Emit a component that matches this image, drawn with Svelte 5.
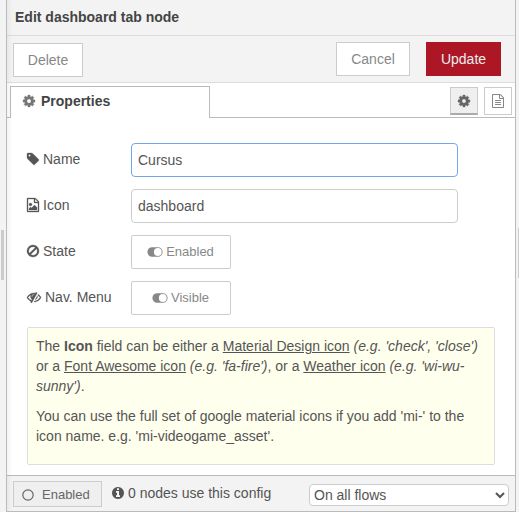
<script>
  let name = $state('Cursus');
  let icon = $state('dashboard');

  const page = 'M1596 380q28 28 48 76t20 88v1152q0 40-28 68t-68 28h-1344q-40 0-68-28t-28-68v-1600q0-40 28-68t68-28h896q40 0 88 20t76 48zm-444-244v376h376q-10-29-22-41l-313-313q-12-12-41-22zm384 1528v-1024h-416q-40 0-68-28t-28-68v-416h-768v1536h1280z';

  const icons = {
    cog: 'M1152 896q0-106-75-181t-181-75-181 75-75 181 75 181 181 75 181-75 75-181zm512-109v222q0 12-8 23t-20 13l-185 28q-19 54-39 91 35 50 107 138 10 12 10 25t-9 23q-27 37-99 108t-94 71q-12 0-26-9l-138-108q-44 23-91 38-16 136-29 186-7 28-36 28h-222q-14 0-24.5-8.5t-11.5-21.5l-28-184q-49-16-90-37l-141 107q-10 9-25 9-14 0-25-11-126-114-165-168-7-10-7-23 0-12 8-23 15-21 51-66.5t54-70.5q-27-50-41-99l-183-27q-13-2-21-12.5t-8-23.5v-222q0-12 8-23t19-13l186-28q14-46 39-92-40-57-107-138-10-12-10-24 0-10 9-23 26-36 98.5-107.5t94.5-71.5q13 0 26 10l138 107q44-23 91-38 16-136 29-186 7-28 36-28h222q14 0 24.5 8.5t11.5 21.5l28 184q49 16 90 37l142-107q9-9 24-9 13 0 25 10 129 119 165 170 7 8 7 22 0 12-8 23-15 21-51 66.5t-54 70.5q26 50 41 98l183 28q13 2 21 12.5t8 23.5z',
    tag: 'M576 448q0-53-37.5-90.5t-90.5-37.5-90.5 37.5-37.5 90.5 37.5 90.5 90.5 37.5 90.5-37.5 37.5-90.5zm1067 576q0 53-37 90l-491 492q-39 37-91 37-53 0-90-37l-715-716q-38-37-64.5-101t-26.5-117v-416q0-52 38-90t90-38h416q53 0 117 26.5t102 64.5l715 714q37 39 37 91z',
    image: page + 'm-128-448v320h-1024v-192l192-192 128 128 384-384zm-832-192q-80 0-136-56t-56-136 56-136 136-56 136 56 56 136-56 136-136 56z',
    doc: page + 'M512 800q0-32 32-32h704q32 0 32 32v64q0 32-32 32h-704q-32 0-32-32zM512 1056q0-32 32-32h704q32 0 32 32v64q0 32-32 32h-704q-32 0-32-32zM512 1312q0-32 32-32h704q32 0 32 32v64q0 32-32 32h-704q-32 0-32-32z',
    ban: 'M1440 893q0-161-87-295l-754 753q137 89 297 89 111 0 211.5-43.5t173.5-116.5 116-174.5 43-212.5zm-999 299l755-754q-135-91-300-91-148 0-273 73t-198 199-73 274q0 162 89 299zm1223-299q0 157-61 300t-163.5 246-245 164-298.5 61-298.5-61-245-164-163.5-246-61-300 61-299.5 163.5-245.5 245-164 298.5-61 298.5 61 245 164 163.5 245.5 61 299.5z',
    eye: 'M555 1335l78-141q-87-63-136-159t-49-203q0-121 61-225-229 117-381 353 167 258 427 375zm389-759q0-20-14-34t-34-14q-125 0-214.5 89.5t-89.5 214.5q0 20 14 34t34 14 34-14 14-34q0-86 61-147t147-61q20 0 34-14t14-34zm363-191q0 7-1 9-106 189-316 567t-315 566l-49 89q-10 16-28 16-12 0-134-70-16-10-16-28 0-12 44-87-143-65-263.5-173t-208.5-245q-20-31-20-69t20-69q153-235 380-371t496-136q89 0 180 17l54-97q10-16 28-16 5 0 18 6t31 15.5 33 18.5 31.5 18.5 19.5 11.5q16 10 16 27zm37 447q0 139-79 253.5t-209 164.5l280-502q8 45 8 84zm448 128q0 35-20 69-39 64-109 145-150 172-347.5 267t-419.5 95l74-132q212-18 392.5-137t301.5-307q-115-179-282-294l63-112q95 64 182.5 153t144.5 184q20 34 20 69z',
    info: 'M1152 1376v-160q0-14-9-23t-23-9h-96v-512q0-14-9-23t-23-9h-320q-14 0-23 9t-9 23v160q0 14 9 23t23 9h96v320h-96q-14 0-23 9t-9 23v160q0 14 9 23t23 9h448q14 0 23-9t9-23zm-128-896v-160q0-14-9-23t-23-9h-192q-14 0-23 9t-9 23v160q0 14 9 23t23 9h192q14 0 23-9t9-23zm640 416q0 209-103 385.5t-279.5 279.5-385.5 103-385.5-103-279.5-279.5-103-385.5 103-385.5 279.5-279.5 385.5-103 385.5 103 279.5 279.5 103 385.5z'
  };
</script>

{#snippet glyph(id)}
  <svg class="glyph" class:wide={id === 'eye'} class:thin={id === 'doc' || id === 'info'} viewBox={id === 'eye' ? '0 0 1792 1792' : '128 0 1536 1792'}>
    <path d={icons[id]} />
  </svg>
{/snippet}

{#snippet toggle()}
  <svg class="toggle" viewBox="0 0 16 10">
    <path fill-rule="evenodd" d="M5.2 .2h5.6a4.8 4.8 0 0 1 0 9.6h-5.6a4.8 4.8 0 0 1 0-9.6zM10.8 1.1a3.9 3.9 0 1 0 0 7.8a3.9 3.9 0 0 0 0-7.8z" />
  </svg>
{/snippet}

<div class="screen">
  <div class="rail left"><i></i></div>
  <section class="tray">
    <header>Edit dashboard tab node</header>
    <div class="toolbar">
      <button class="btn delete">Delete</button>
      <span class="grow"></span>
      <button class="btn cancel">Cancel</button>
      <button class="btn primary">Update</button>
    </div>
    <div class="tabs">
      <div class="tab">{@render glyph('cog')}<span>Properties</span></div>
      <div class="tools">
        <button class="tool active" aria-label="Properties">{@render glyph('cog')}</button>
        <button class="tool" aria-label="Description">{@render glyph('doc')}</button>
      </div>
    </div>
    <div class="body">
      <div class="row">
        <label for="name">{@render glyph('tag')}<span>Name</span></label>
        <input id="name" class="focus" bind:value={name} />
      </div>
      <div class="row">
        <label for="icon">{@render glyph('image')}<span>Icon</span></label>
        <input id="icon" bind:value={icon} />
      </div>
      <div class="row">
        <div class="label">{@render glyph('ban')}<span>State</span></div>
        <button class="switch">{@render toggle()}Enabled</button>
      </div>
      <div class="row">
        <div class="label">{@render glyph('eye')}<span>Nav. Menu</span></div>
        <button class="switch">{@render toggle()}Visible</button>
      </div>
      <div class="tips">
        <p>The <b>Icon</b> field can be either a <u>Material Design icon</u> <i>(e.g. 'check', 'close')</i> or a <u>Font Awesome icon</u> <i>(e.g. 'fa-fire')</i>, or a <u>Weather icon</u> <i>(e.g. 'wi-wu-sunny')</i>.</p>
        <p>You can use the full set of google material icons if you add 'mi-' to the icon name. e.g. 'mi-videogame_asset'.</p>
      </div>
    </div>
    <footer>
      <button class="enable"><svg viewBox="0 0 12 12"><circle cx="6" cy="6" r="5.2" /></svg>Enabled</button>
      <div class="usage">{@render glyph('info')}<span>0 nodes use this config</span></div>
      <select aria-label="Scope"><option>On all flows</option></select>
    </footer>
  </section>
  <div class="rail right"><i></i></div>
</div>

<style>
  :global(body) { margin: 0; overflow: hidden; }
  .screen, .screen * { box-sizing: border-box; }
  .screen {
    display: flex;
    width: 519px;
    height: 512px;
    background: #f3f3f3;
    color: #555;
    font: 14px/20px "Liberation Sans", Arial, sans-serif;
  }
  button, input, select { font: inherit; color: inherit; margin: 0; }
  button { padding: 0; }
  .rail { width: 6px; padding: 230px 0 0 1px; }
  .rail.right { width: 3px; padding: 228px 0 0 2px; }
  .rail i { display: block; width: 3px; height: 50px; background: #ccc; }
  .rail.right i { width: 1px; }
  .tray {
    position: relative;
    display: flex;
    flex-direction: column;
    width: 510px;
    background: #fff;
    border: solid #bbb;
    border-width: 0 1px 1px;
  }
  .tray::after {
    content: '';
    position: absolute;
    inset: 0 auto 0 0;
    width: 6px;
    background: linear-gradient(90deg, rgba(0, 0, 0, .045), transparent);
    pointer-events: none;
  }
  .glyph {
    display: block;
    flex: none;
    width: 12px;
    height: 14px;
    overflow: visible;
    fill: currentColor;
    stroke: currentColor;
    stroke-width: 40;
  }
  .glyph.wide { width: 14px; }
  .glyph.thin { stroke: none; }
  header {
    height: 36px;
    padding: 7px 8px;
    background: #f3f3f3;
    border-bottom: 1px solid #ddd;
    color: #444;
    font-weight: bold;
  }
  .toolbar {
    display: flex;
    height: 47px;
    padding: 6px 14px 0 6px;
    background: #f3f3f3;
    border-bottom: 1px solid #ddd;
  }
  .grow { flex: 1; }
  .btn { height: 34px; background: #fff; border: 1px solid #ccc; color: #888; }
  .delete { width: 70px; margin-top: 1px; }
  .cancel { width: 74px; margin-right: 16px; }
  .primary { width: 75px; background: #ad1625; border-color: #ad1625; color: #eee; }
  .tabs {
    display: flex;
    justify-content: space-between;
    height: 35px;
    padding: 3px 3px 0;
    border-bottom: 1px solid #bbb;
  }
  .tab {
    display: flex;
    align-items: center;
    width: 200px;
    height: 32px;
    padding: 0 12px 3px;
    gap: 6px;
    background: #fff;
    border: 1px solid #bbb;
    border-bottom: 0;
    color: #444;
    font-weight: bold;
  }
  .tab .glyph { color: #777; }
  .tools { display: flex; gap: 6px; padding-top: 1px; }
  .tool {
    display: flex;
    align-items: center;
    justify-content: center;
    width: 28px;
    height: 28px;
    background: #fff;
    border: 1px solid #ccc;
    color: #888;
  }
  .tool.active { background: #efefef; border-bottom: 2px solid #aaa; color: #666; }
  .body { flex: 1; padding: 25px 20px 0; }
  .row { display: flex; height: 34px; margin-bottom: 12px; }
  label, .label { display: flex; align-items: center; gap: 4px; width: 104px; padding-bottom: 2px; }
  input {
    width: 327px;
    height: 34px;
    padding: 0 6px;
    background: #fff;
    border: 1px solid #ccc;
    border-radius: 4px;
    outline: none;
  }
  .focus { border-color: #72a7e8; }
  .switch {
    display: flex;
    align-items: center;
    justify-content: center;
    gap: 3px;
    width: 100px;
    height: 34px;
    padding-right: 1px;
    background: #fff;
    border: 1px solid #ccc;
    border-radius: 2px;
    color: #888;
    font-size: 13px;
  }
  .toggle { width: 16px; height: 10px; fill: #888; }
  .tips {
    width: 468px;
    height: 138px;
    padding: 8px;
    background: #ffffee;
    border: 1px solid #ddd;
    border-radius: 2px;
  }
  p { margin: 0 0 10px; }
  footer {
    display: flex;
    height: 36px;
    padding: 5px 6px 0;
    background: #f3f3f3;
    border-top: 1px solid #bbb;
  }
  .enable {
    display: flex;
    align-items: center;
    width: 89px;
    height: 26px;
    padding: 1px 0 0 8px;
    gap: 8px;
    background: #efefef;
    border: 1px solid #ccc;
    color: #666;
    font-size: 13px;
  }
  .enable svg { width: 12px; height: 12px; fill: none; stroke: #666; stroke-width: 1.2; }
  .usage { display: flex; align-items: center; gap: 4px; height: 24px; margin-left: 10px; }
  select {
    width: 200px;
    height: 22px;
    margin: 3px 0 0 auto;
    padding: 0;
    background-color: #fff;
    border: 1px solid #ccc;
    border-radius: 4px;
  }
</style>
